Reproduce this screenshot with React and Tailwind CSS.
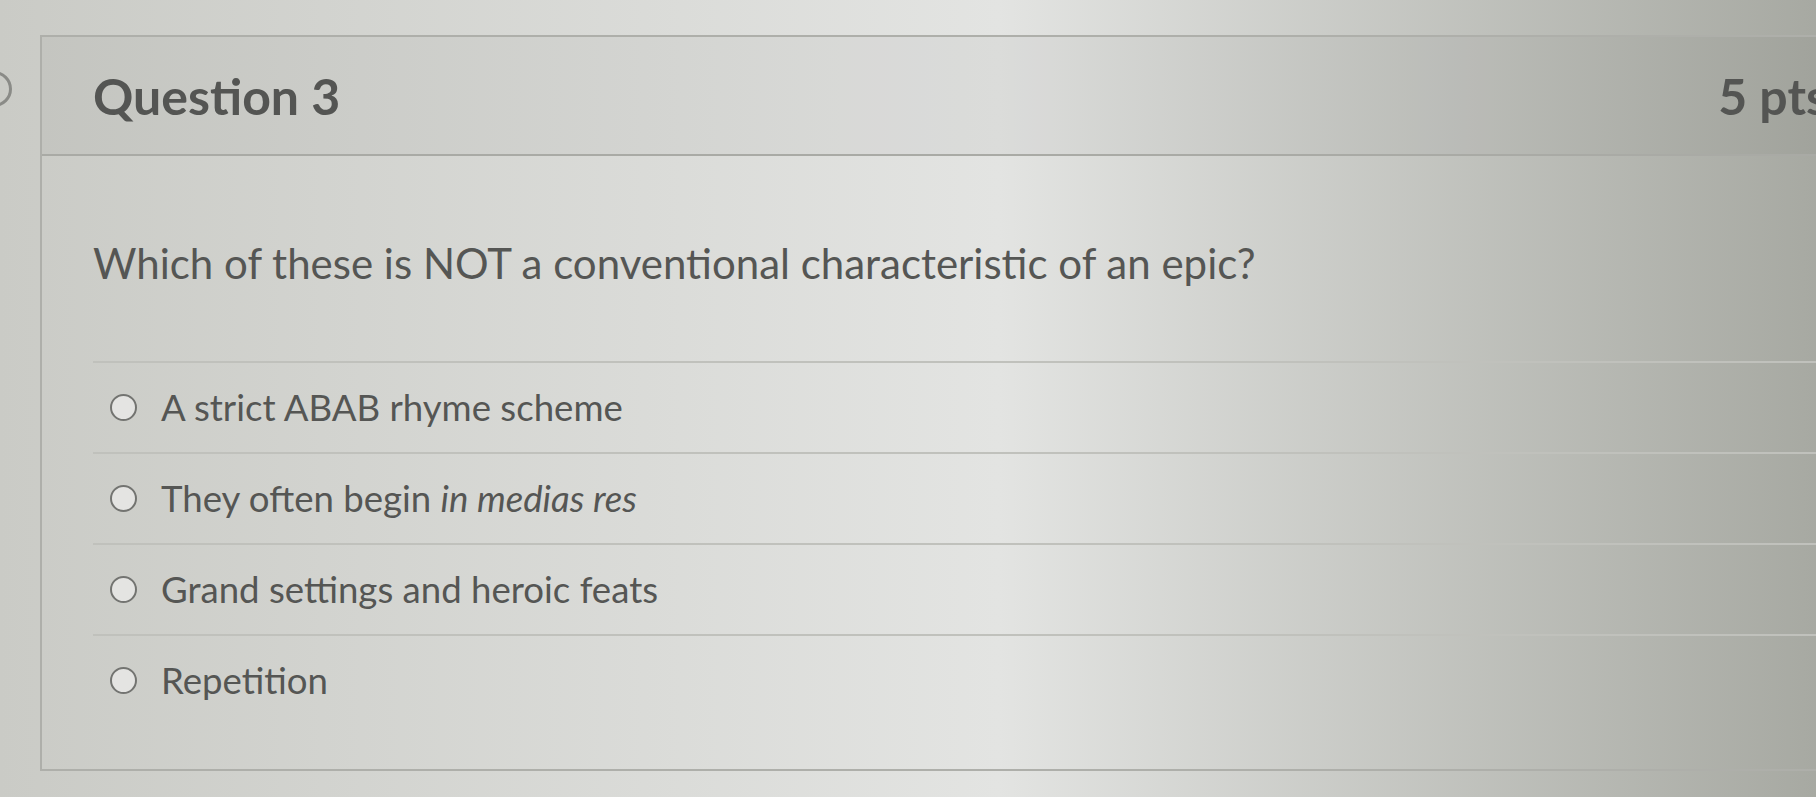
const answers = [
  { id: "a", label: <>A strict ABAB rhyme scheme</> },
  {
    id: "b",
    label: (
      <>
        They often begin <em className="italic">in medias res</em>
      </>
    ),
  },
  { id: "c", label: <>Grand settings and heroic feats</> },
  { id: "d", label: <>Repetition</> },
]

function Radio() {
  return (
    <span className="w-[27px] h-[27px] rounded-full border-[2.5px] border-[#737471] bg-[#e4e4e2] shrink-0" />
  )
}

export default function App() {
  return (
    <div
      className="w-[1816px] h-[797px] overflow-hidden bg-linear-to-r from-[#cacbc6] via-[#e3e4e2] via-55% to-[#a7a9a2] text-[#555654]"
      style={{ fontFamily: "Lato, 'Open Sans', sans-serif" }}
    >
      <div className="flex pt-[35px]">
        {/* left gutter with the cut-off flag icon */}
        <div className="w-[40px] shrink-0 pt-[36px] overflow-hidden">
          <span className="block w-[36px] h-[36px] -ml-[24px] rounded-full border-[3px] border-[#8a8b87]" />
        </div>

        {/* question card */}
        <div className="w-[1900px] shrink-0 border-l-2 border-t-2 border-b-2 border-[#aeafaa]">
          <div className="h-[119px] flex items-center justify-between pl-[51px] pr-[112px] border-b-2 border-[#a9aaa5] bg-[#000000]/[0.03]">
            <h2 className="text-[50px] font-bold leading-none text-[#545553]">Question 3</h2>
            <span className="text-[50px] font-bold leading-none text-[#545553]">5 pts</span>
          </div>

          <div className="pl-[51px] pt-[82px] pb-[44px]">
            <p className="text-[42px] leading-[1.2]">
              Which of these is NOT a conventional characteristic of an epic?
            </p>

            <div className="mt-[73px]">
              {answers.map((a) => (
                <label
                  key={a.id}
                  className="h-[91px] flex items-center gap-[24px] pl-[17px] border-t-2 border-[#c0c1bc]"
                >
                  <Radio />
                  <span className="text-[36.6px] leading-[1.2]">{a.label}</span>
                </label>
              ))}
            </div>
          </div>
        </div>
      </div>
    </div>
  )
}
